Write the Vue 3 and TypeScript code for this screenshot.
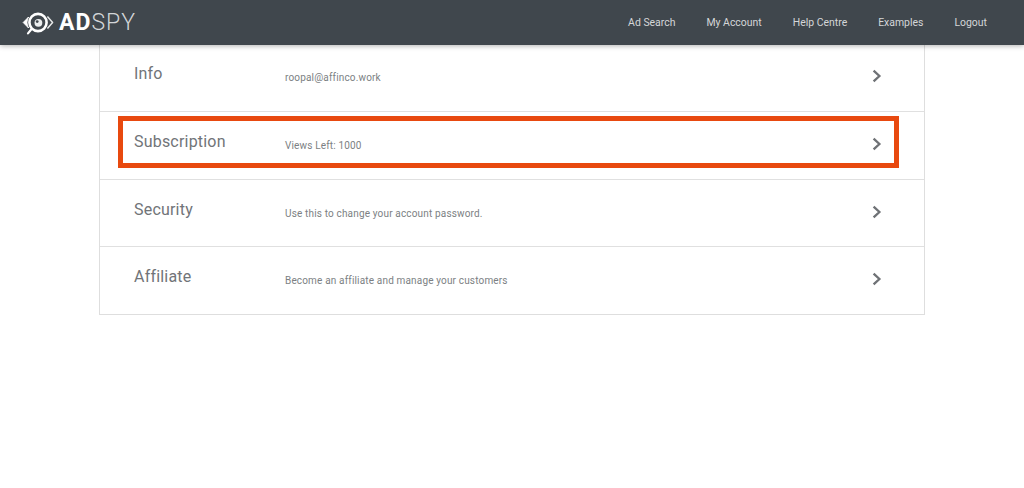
<script setup lang="ts">
interface AccountRow {
  title: string
  detail: string
  highlighted?: boolean
}

const navLinks: string[] = ['Ad Search', 'My Account', 'Help Centre', 'Examples', 'Logout']

const rows: AccountRow[] = [
  { title: 'Info', detail: 'roopal@affinco.work' },
  { title: 'Subscription', detail: 'Views Left: 1000', highlighted: true },
  { title: 'Security', detail: 'Use this to change your account password.' },
  { title: 'Affiliate', detail: 'Become an affiliate and manage your customers' }
]
</script>

<template>
  <div class="page">
    <header class="topbar">
      <div class="logo">
        <!-- Eye with magnifier handle -->
        <svg class="logo-mark" width="32" height="24" viewBox="0 0 32 24" fill="none">
          <path d="M1.2 11.5 L6.6 6 C5.6 7.8 5 9.6 5 11.5 C5 13.4 5.6 15.2 6.6 17 Z" fill="#fff" stroke="#fff" stroke-width="1" stroke-linejoin="round" />
          <path d="M25.4 5.5 L30.6 11.5 L25.4 17.5" stroke="#e6e8e9" stroke-width="1.5" stroke-linejoin="round" />
          <circle cx="16" cy="11.5" r="8.6" stroke="#fff" stroke-width="2.6" />
          <circle cx="16.4" cy="11.8" r="3.9" fill="#eceeef" />
          <circle cx="15.2" cy="10.6" r="1.4" fill="#40474d" />
          <path d="M9.6 18 L6 22.4" stroke="#fff" stroke-width="2.2" stroke-linecap="round" />
        </svg>
        <span class="logo-text"><b>AD</b>SPY</span>
      </div>
      <nav class="nav">
        <a v-for="link in navLinks" :key="link" class="nav-link">{{ link }}</a>
      </nav>
    </header>

    <main class="panel">
      <div v-for="row in rows" :key="row.title" class="row">
        <h2 class="row-title">{{ row.title }}</h2>
        <p class="row-detail">{{ row.detail }}</p>
        <svg class="chevron" width="10" height="14" viewBox="0 0 10 14" fill="none">
          <path d="M1.6 1.6 L7.4 7 L1.6 12.4" stroke="#6f7276" stroke-width="2.3" />
        </svg>
        <div v-if="row.highlighted" class="callout"></div>
      </div>
    </main>
  </div>
</template>

<style>
body {
  margin: 0;
  background: #fff;
}
</style>

<style scoped>
.page {
  height: 488px;
  overflow: hidden;
  font-family: Roboto, "Liberation Sans", sans-serif;
}

.topbar {
  position: relative;
  z-index: 2;
  height: 45px;
  box-sizing: border-box;
  display: flex;
  align-items: center;
  justify-content: space-between;
  padding: 0 37px 0 22px;
  background: #40474d;
  box-shadow: 0 1px 5px rgba(0, 0, 0, 0.3);
}

.logo {
  display: flex;
  align-items: center;
  gap: 5px;
}

.logo-mark {
  display: block;
  margin-top: 1px;
}

.logo-text {
  font-size: 23px;
  font-weight: 300;
  letter-spacing: 1px;
  color: #d3d6d8;
  line-height: 24px;
}

.logo-text b {
  font-weight: 700;
  color: #fff;
}

.nav {
  display: flex;
  gap: 31px;
}

.nav-link {
  font-size: 10.45px;
  line-height: 16px;
  color: #d4d6d8;
}

.panel {
  width: 826px;
  box-sizing: border-box;
  margin: 0 auto 0 99px;
  border: 1px solid #dedede;
  border-top: 0;
}

.row {
  position: relative;
  height: 67px;
  box-sizing: border-box;
  display: flex;
  align-items: flex-start;
  padding-left: 34px;
  border-bottom: 1px solid #e0e0e0;
}

.row:nth-child(2) {
  height: 68px;
}

.row:last-child {
  border-bottom: 0;
}

/* Rows after the first sit a pixel lower inside their box */
.row + .row {
  padding-top: 1px;
}

.row-title {
  width: 151px;
  margin: 19px 0 0;
  font-size: 16px;
  font-weight: 400;
  line-height: 20px;
  letter-spacing: 0.2px;
  color: #717478;
}

.row-detail {
  margin: 26px 0 0;
  font-size: 10px;
  line-height: 14px;
  letter-spacing: 0.16px;
  color: #7c7f83;
}

.chevron {
  position: absolute;
  right: 42px;
  top: 24px;
}

.row + .row .chevron {
  top: 25px;
}

/* Annotation box drawn over the row */
.callout {
  position: absolute;
  left: 18px;
  right: 25px;
  top: 4px;
  height: 52px;
  box-sizing: border-box;
  border: 5px solid #e8490f;
}
</style>
